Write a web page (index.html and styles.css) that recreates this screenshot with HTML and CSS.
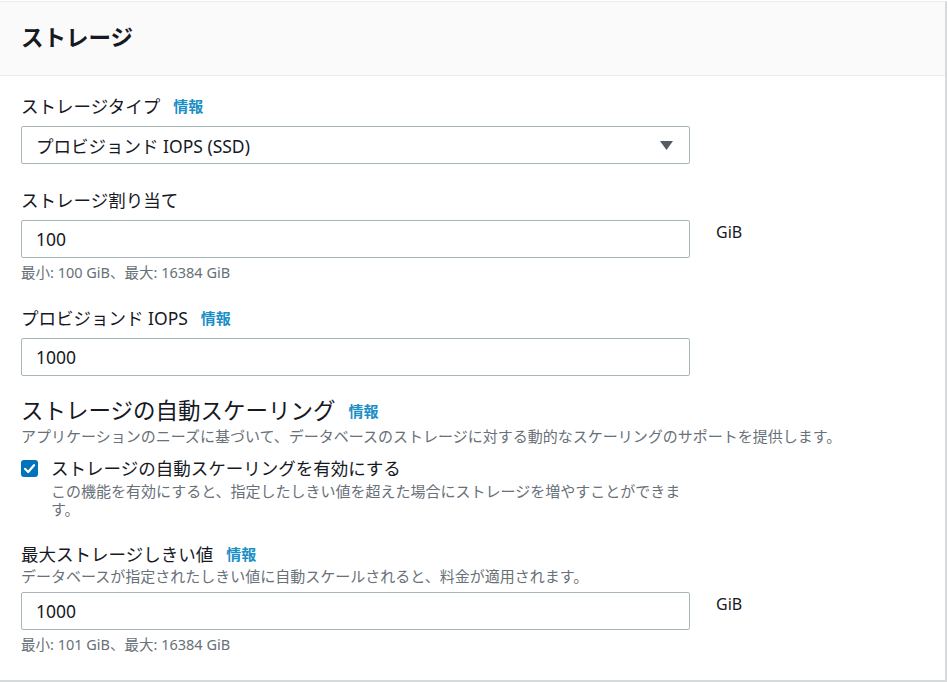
FILE: index.html
```html
<!DOCTYPE html>
<html lang="ja">
<head>
<meta charset="utf-8">
<title>ストレージ</title>
<link rel="stylesheet" href="styles.css">
</head>
<body>
<div class="card">
  <div class="card-header">
    <h2 class="card-title">ストレージ</h2>
  </div>
  <div class="card-body">
    <div class="field first">
      <div class="label">ストレージタイプ<a class="info">情報</a></div>
      <div class="control select">
        <span>プロビジョンド IOPS (SSD)</span>
        <svg class="caret" width="13" height="9" viewBox="0 0 13 9"><path d="M0 0H13L6.5 9Z" fill="#545b64"/></svg>
      </div>
    </div>

    <div class="field">
      <div class="label">ストレージ割り当て</div>
      <div class="row">
        <div class="control input">100</div>
        <div class="unit">GiB</div>
      </div>
      <div class="hint">最小: 100 GiB、最大: 16384 GiB</div>
    </div>

    <div class="field">
      <div class="label">プロビジョンド IOPS<a class="info">情報</a></div>
      <div class="control input">1000</div>
    </div>

    <div class="section">
      <div class="section-title">ストレージの自動スケーリング<a class="info">情報</a></div>
      <div class="desc">アプリケーションのニーズに基づいて、データベースのストレージに対する動的なスケーリングのサポートを提供します。</div>
      <div class="check-row">
        <span class="checkbox">
          <svg width="17" height="17" viewBox="0 0 17 17"><rect x="0" y="0" width="17" height="17" rx="3" fill="#0073bb"/><path d="M4 8.8L7.2 12L13 5.2" fill="none" stroke="#fff" stroke-width="2.2" stroke-linecap="round" stroke-linejoin="round"/></svg>
        </span>
        <div class="check-text">
          <div class="check-label">ストレージの自動スケーリングを有効にする</div>
          <div class="check-desc">この機能を有効にすると、指定したしきい値を超えた場合にストレージを増やすことができます。</div>
        </div>
      </div>
    </div>

    <div class="field last">
      <div class="label">最大ストレージしきい値<a class="info">情報</a></div>
      <div class="desc tight">データベースが指定されたしきい値に自動スケールされると、料金が適用されます。</div>
      <div class="row">
        <div class="control input">1000</div>
        <div class="unit">GiB</div>
      </div>
      <div class="hint">最小: 101 GiB、最大: 16384 GiB</div>
    </div>
  </div>
</div>
</body>
</html>
```

FILE: styles.css
```css
* { box-sizing: border-box; }
html, body { margin: 0; padding: 0; background: #ffffff; }
body {
  font-family: "Noto Sans", "Noto Sans CJK JP", sans-serif;
  color: #16191f;
}
.card {
  width: 947px;
  margin-top: 1px;
  border-top: 1px solid #eaeded;
  border-right: 2px solid #d5dbdb;
  border-bottom: 2px solid #d5dbdb;
  height: 681px;
  background: #fff;
}
.card-header {
  background: #fafafa;
  border-bottom: 1px solid #eaeded;
  padding: 20px 20px 22px 21px;
}
.card-title {
  margin: 0;
  font-size: 22.5px;
  line-height: 31px;
  font-weight: 700;
}
.card-body {
  padding: 18px 0 0 21px;
}
.field { margin-top: 24px; }
.field.first { margin-top: 0; }
.label {
  font-size: 17.5px;
  line-height: 24px;
  display: flex;
  align-items: center;
}
.info {
  color: #1a8fc6;
  font-weight: 700;
  font-size: 15px;
  margin-left: 13px;
}
.control {
  margin-top: 8px;
  width: 669px;
  height: 38px;
  border: 1px solid #aab7b8;
  border-radius: 2px;
  padding: 0 16px 0 14px;
  font-size: 17.5px;
  display: flex;
  align-items: center;
  justify-content: space-between;
}
.row { display: flex; align-items: flex-start; gap: 26px; }
.row .control { flex: none; }
.unit {
  margin-top: 8px;
  font-size: 16px;
  line-height: 24px;
}
.hint {
  margin-top: 4px;
  font-size: 14.5px;
  line-height: 20px;
  color: #687078;
}
.section { margin-top: 20px; }
.section-title {
  font-size: 22.5px;
  line-height: 30px;
  display: flex;
  align-items: center;
}
.desc {
  font-size: 15px;
  line-height: 20px;
  color: #687078;
}
.desc.tight { margin-bottom: -2px; }
.check-row {
  display: flex;
  gap: 13px;
  margin-top: 10px;
}
.checkbox { display: block; height: 17px; margin-top: 4px; }
.checkbox svg { display: block; }
.check-text { width: 639px; }
.check-label { font-size: 17.5px; line-height: 24px; }
.check-desc {
  margin-top: 2px;
  font-size: 15px;
  line-height: 18px;
  color: #687078;
}
.field.last { margin-top: 24px; }
```
